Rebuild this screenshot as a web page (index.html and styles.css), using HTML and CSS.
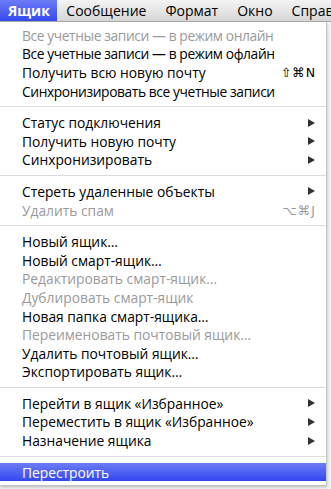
FILE: index.html
```html
<!DOCTYPE html>
<html lang="ru">

<head>
  <meta charset="utf-8">
  <title>Ящик</title>
  <meta name="viewport" content="width=device-width, initial-scale=1.0">
  <link rel="stylesheet" href="styles.css">
</head>

<body>
  <header class="menubar">
    <span class="menubar-item active">Ящик</span>
    <span class="menubar-item">Сообщение</span>
    <span class="menubar-item">Формат</span>
    <span class="menubar-item">Окно</span>
    <span class="menubar-item">Справка</span>
  </header>

  <div class="desk">
    <ul class="menu">
      <li class="item disabled narrow"><span>Все учетные записи — в режим онлайн</span></li>
      <li class="item narrow"><span>Все учетные записи — в режим офлайн</span></li>
      <li class="item"><span>Получить всю новую почту</span><span class="key">⇧⌘N</span></li>
      <li class="item narrow"><span>Синхронизировать все учетные записи</span></li>
      <li class="sep"></li>
      <li class="item"><span>Статус подключения</span><svg class="arrow" viewBox="0 0 7 8"><polygon points="0,0 7,4 0,8"/></svg></li>
      <li class="item"><span>Получить новую почту</span><svg class="arrow" viewBox="0 0 7 8"><polygon points="0,0 7,4 0,8"/></svg></li>
      <li class="item"><span>Синхронизировать</span><svg class="arrow" viewBox="0 0 7 8"><polygon points="0,0 7,4 0,8"/></svg></li>
      <li class="sep"></li>
      <li class="item"><span>Стереть удаленные объекты</span><svg class="arrow" viewBox="0 0 7 8"><polygon points="0,0 7,4 0,8"/></svg></li>
      <li class="item disabled"><span>Удалить спам</span><span class="key">⌥⌘J</span></li>
      <li class="sep"></li>
      <li class="item"><span>Новый ящик…</span></li>
      <li class="item"><span>Новый смарт-ящик…</span></li>
      <li class="item disabled"><span>Редактировать смарт-ящик…</span></li>
      <li class="item disabled"><span>Дублировать смарт-ящик</span></li>
      <li class="item"><span>Новая папка смарт-ящика…</span></li>
      <li class="item disabled"><span>Переименовать почтовый ящик…</span></li>
      <li class="item"><span>Удалить почтовый ящик…</span></li>
      <li class="item"><span>Экспортировать ящик…</span></li>
      <li class="sep"></li>
      <li class="item"><span>Перейти в ящик «Избранное»</span><svg class="arrow" viewBox="0 0 7 8"><polygon points="0,0 7,4 0,8"/></svg></li>
      <li class="item"><span>Переместить в ящик «Избранное»</span><svg class="arrow" viewBox="0 0 7 8"><polygon points="0,0 7,4 0,8"/></svg></li>
      <li class="item"><span>Назначение ящика</span><svg class="arrow" viewBox="0 0 7 8"><polygon points="0,0 7,4 0,8"/></svg></li>
      <li class="sep"></li>
      <li class="item selected"><span>Перестроить</span></li>
    </ul>
  </div>
</body>

</html>
```

FILE: styles.css
```css
:root {
  --row-height: 18.6px;
  --text-color: #000;
  --disabled-color: #9a9a9a;
  --sep-color: #dcdcdc;
  --select-top: #6c7cf6;
  --select-bottom: #3348ef;
}

html,
body {
  margin: 0;
  padding: 0;
}

body {
  width: 331px;
  height: 489px;
  overflow: hidden;
  font-family: "Open Sans", sans-serif;
  background-color: #f4f4f5;
}

.menubar {
  display: flex;
  height: 22px;
  background: linear-gradient(#f4f4f4, #d6d6d6);
  border-bottom: 1px solid #a8a8a8;
  box-sizing: border-box;
  font-size: 14px;
  white-space: nowrap;
  overflow: hidden;
}

.menubar-item {
  padding: 0 9.5px;
  line-height: 21px;
  color: #000;
}

.menubar-item.active {
  font-weight: bold;
  padding: 0 7px 0 8px;
  color: #fff;
  background: linear-gradient(var(--select-top), var(--select-bottom));
}

.desk {
  display: flex;
  height: 467px;
}

.menu {
  list-style-type: none;
  margin: 0;
  padding: 4px 0 4px 0;
  width: 327px;
  height: 463px;
  box-sizing: border-box;
  background-color: #fff;
  border-right: 1px solid #c6c6c6;
  box-shadow: 0 2px 3px rgba(0, 0, 0, 0.25);
  font-size: 13.8px;
}

.item {
  display: flex;
  align-items: center;
  justify-content: space-between;
  height: var(--row-height);
  padding: 0 10px 0 22px;
  color: var(--text-color);
  white-space: nowrap;
}

/* these lines run wider in Open Sans than in the original font */
.item.narrow {
  letter-spacing: -0.4px;
}

.item.disabled {
  color: var(--disabled-color);
}

.item.selected {
  color: #fff;
  background: linear-gradient(var(--select-top), var(--select-bottom));
}

.key {
  font-family: "DejaVu Sans", sans-serif;
  font-size: 12.5px;
  letter-spacing: 1px;
}

.arrow {
  width: 7px;
  height: 8px;
  margin-right: 1px;
  fill: #333;
}

.sep {
  height: 1px;
  margin: 6px 0;
  background-color: var(--sep-color);
}
```
